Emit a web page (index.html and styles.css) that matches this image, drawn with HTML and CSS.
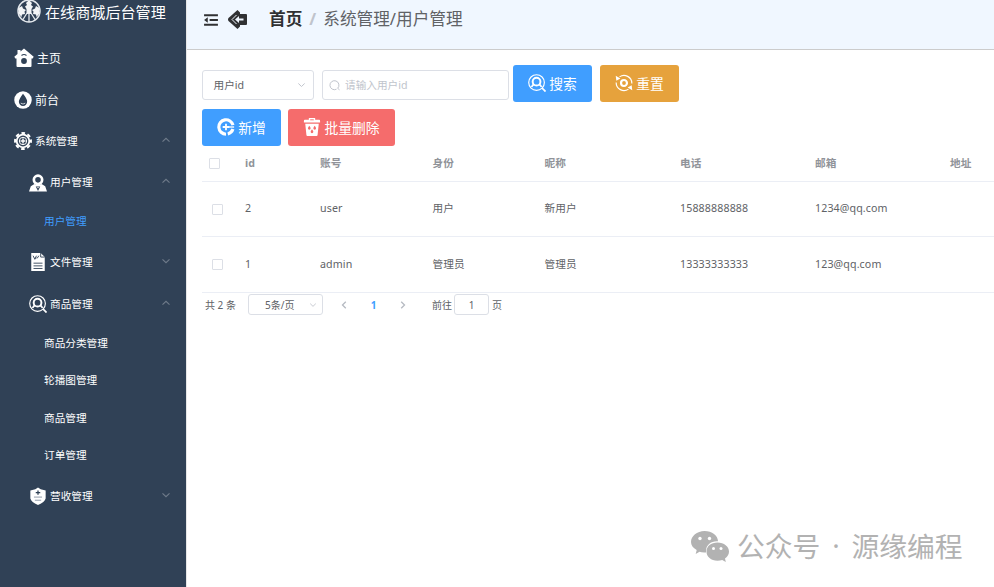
FILE: index.html
```html
<!DOCTYPE html>
<html lang="zh-CN">
<head>
<meta charset="utf-8">
<title>在线商城后台管理</title>
<link rel="stylesheet" href="styles.css">
</head>
<body>
<svg class="defs" width="0" height="0">
  <symbol id="up" viewBox="0 0 10 6"><path d="M1.500 4.700 5 1.300l3.500 3.400" fill="none" stroke="currentColor" stroke-width="1.100"/></symbol>
  <symbol id="down" viewBox="0 0 10 6"><path d="M1.500 1.300 5 4.700l3.500-3.400" fill="none" stroke="currentColor" stroke-width="1.100"/></symbol>
  <symbol id="search-user" viewBox="0 0 20 20"><g fill="none" stroke="currentColor"><circle cx="9.500" cy="9.500" r="8.700" stroke-width="1.300"/><circle cx="9.500" cy="8.500" r="4.300" stroke-width="2.200"/><path d="M4 14.500q1-2.500 2.800-3M15 14.500q-1-2.500-2.800-3" stroke-width="1.900"/><path d="m15.500 15.500 4 4" stroke-width="1.900"/></g></symbol>
</svg>
<div class="app">
  <aside class="sidebar">
    <div class="brand">
      <svg class="brand-icon" viewBox="0 0 24 24"><circle cx="12" cy="12" r="11" fill="none" stroke="#e4e8ed" stroke-width="1.500"/><g fill="#f2f4f6"><path d="m12 1 3 3-1 2 2 1.500-1.500 2.500v5h-5v-5L8 7.500 10 6 9 4z"/><path d="M1.500 9 5 7l1 2.500L9 11l-1.500 1.500L8 15l-3 .5L4.500 18 2 15zM22.500 9 19 7l-1 2.500-3 1.500 1.500 1.500L16 15l3 .5.500 2.500L22 15z"/></g><path d="M12 14v9M10 14l-4 6.500M14 14l4 6.500" stroke="#e4e8ed" stroke-width="1.300"/></svg>
      <span>在线商城后台管理</span>
    </div>
    <nav>
      <a class="item first">
        <svg class="icon home" viewBox="0 0 20 20"><path d="m10 .5 9.700 8.200-1 1.800H17.500V18q0 1-1 1h-13q-1 0-1-1v-7.500H1.300l-1-1.800L3.500 6V2h3v1.500z" fill="#fff"/><circle cx="10" cy="13" r="2.900" fill="#304156"/><path d="M7.500 7.500q2.500-2 5 0" fill="none" stroke="#304156" stroke-width="1.200"/></svg>
        <span class="wide">主页</span></a>
      <a class="item">
        <svg class="icon" viewBox="0 0 20 20"><circle cx="10" cy="10" r="9.700" fill="#fff"/><path d="M10 3q5 6 4.600 9a4.600 4.600 0 0 1-9.200 0Q5.400 9 10 3z" fill="#304156"/><path d="M7.500 13.500q2.500 2 5 0" fill="none" stroke="#fff" stroke-width=".8"/></svg>
        <span class="wide front">前台</span></a>
      <a class="item">
        <svg class="icon" viewBox="0 0 20 20"><g fill="none" stroke="#fff"><circle cx="10" cy="10" r="8.800" stroke-width="2.300" stroke-dasharray="4 2.910" stroke-dashoffset="2"/><circle cx="10" cy="10" r="7" stroke-width="2"/><circle cx="10" cy="10" r="4.100" stroke-width="1.100"/><path d="M10 7.200v5.600M7.200 10h5.600" stroke-width="1.600"/></g></svg>
        <span>系统管理</span><svg class="arrow"><use href="#up"/></svg></a>
      <a class="item sub people">
        <svg class="icon" viewBox="0 0 20 20"><circle cx="10" cy="6.500" r="4.600" fill="none" stroke="#fff" stroke-width="3"/><path d="M6 11q4 2.500 8 0l4 2.500 2 6H0l2-6z" fill="#fff"/><path d="M7.500 14h5L10 19z" fill="#304156"/><path d="M9 14.500h2L10 16z" fill="#fff"/></svg>
        <span>用户管理</span><svg class="arrow"><use href="#up"/></svg></a>
      <a class="item leaf active"><span>用户管理</span></a>
      <a class="item sub files">
        <svg class="icon" viewBox="0 0 20 20"><path d="M2.500 0H13l4.500 4.500V20h-15z" fill="#fff"/><path d="M13 0v4.500h4.500M5 11.300h10M5 14.300h10M5 17.200h10M4.500 3l2 4 2-2M9 6l2-3M8.500 3l-2 3" fill="none" stroke="#304156" stroke-width="1"/></svg>
        <span>文件管理</span><svg class="arrow"><use href="#down"/></svg></a>
      <a class="item sub goods">
        <svg class="icon"><use href="#search-user"/></svg>
        <span>商品管理</span><svg class="arrow"><use href="#up"/></svg></a>
      <a class="item leaf"><span>商品分类管理</span></a>
      <a class="item leaf"><span>轮播图管理</span></a>
      <a class="item leaf"><span>商品管理</span></a>
      <a class="item leaf"><span>订单管理</span></a>
      <a class="item sub income">
        <svg class="icon" viewBox="0 0 20 20"><path d="m10 .5 3 2 5.500 1.300v9q-1 4.200-8.500 7.200-7.500-3-8.500-7.200v-9L7 2.500z" fill="#fff"/><path d="M10 4v4.500M7.500 6.200h5" stroke="#304156" stroke-width="1.400"/><path d="M5.500 11.200h9M6.500 14.700h7" stroke="#8491a0" stroke-width="1"/></svg>
        <span>营收管理</span><svg class="arrow"><use href="#down"/></svg></a>
    </nav>
  </aside>
  <main class="main">
    <header class="topbar">
      <svg class="fold" viewBox="0 0 15 13"><g fill="#303133"><path d="M0 .3h15v2.200H0zM6 5.400h9v2.200H6zM0 10.500h15v2.200H0zM0 6.500l4-3v6z"/></g></svg>
      <svg class="back" viewBox="0 0 20 19"><path d="m9.500 0 2.500 2.500V4h6q1 0 1 1v9q0 1-1 1h-6v1.500L9.500 19 .5 11q-1-1.500 0-3z" fill="#303133"/><path d="M8.500 5 4 9.500 8.500 14" fill="none" stroke="#f0f7ff" stroke-width="1"/><path d="m7 9.500 4-3.500v2.500h4.500v2H11V13z" fill="#f0f7ff"/></svg>
      <div class="crumbs"><b>首页</b><i>/</i><span>系统管理/用户管理</span></div>
    </header>
    <section class="content">
      <div class="filters">
        <div class="select"><span>用户id</span><svg class="caret"><use href="#down"/></svg></div>
        <label class="search"><svg viewBox="0 0 12 12"><path d="M8.700 9.300a4.500 4.500 0 1 0-1.200.9M8.700 9.300l1.800 1.500" fill="none" stroke="#c0c4cc"/></svg><input placeholder="请输入用户id"></label>
        <button class="btn primary find"><svg><use href="#search-user"/></svg>搜索</button>
        <button class="btn warning"><svg viewBox="0 0 20 20"><g fill="none" stroke="#fff" stroke-width="1.300"><path d="M5 3.200A8.700 8.700 0 0 1 18.700 10.500M15 16.800A8.700 8.700 0 0 1 1.300 9.500"/><circle cx="10" cy="10" r="3.300" stroke-width="2.400"/></g><path d="m.8 2 .7 5.500L6 5zM19.200 18l-.7-5.500L14 15z" fill="#fff"/></svg>重置</button>
      </div>
      <div class="actions">
        <button class="btn primary"><svg viewBox="0 0 20 20"><g fill="none" stroke="#fff"><path d="M17.800 8A8 8 0 1 0 10 18M12 17.700a8 8 0 0 0 5.700-5.400" stroke-width="3.500"/><path d="M10 6.300v7.400M6.300 10h7.400" stroke-width="2"/><path d="M13 10h6" stroke-width="1.500"/></g></svg>新增</button>
        <button class="btn danger"><svg viewBox="0 0 20 20"><path d="M6.500 0h7v2H18q1 0 1 1.500V5H1V3.500Q1 2 2 2h4.500zM2.500 6.500h15L16.200 19q-.1 1-1 1H4.800q-.9 0-1-1z" fill="#fff"/><path d="M8 2h4" stroke="#f56c6c"/><path d="M7 8.500q3 3.500 0 4.500-3-1 0-4.500M13 8.500q3 3.500 0 4.500-3-1 0-4.500M10 12.500q3 3.500 0 4.500-3-1 0-4.500" fill="#f56c6c"/></svg>批量删除</button>
      </div>
      <div class="table">
        <div class="row head"><div><i class="check"></i></div><div>id</div><div>账号</div><div>身份</div><div>昵称</div><div>电话</div><div>邮箱</div><div>地址</div></div>
        <div class="row"><div><i class="check"></i></div><div>2</div><div>user</div><div>用户</div><div>新用户</div><div>15888888888</div><div>1234@qq.com</div><div></div></div>
        <div class="row last"><div><i class="check"></i></div><div>1</div><div>admin</div><div>管理员</div><div>管理员</div><div>13333333333</div><div>123@qq.com</div><div></div></div>
      </div>
      <div class="pager">
        <span class="total">共 2 条</span>
        <div class="size"><span>5条/页</span><svg class="caret"><use href="#down"/></svg></div>
        <svg class="step prev" viewBox="0 0 6 8"><path d="M4.800.8 1.500 4l3.300 3.200" fill="none" stroke="#b6bac2" stroke-width="1.300"/></svg>
        <b class="current">1</b>
        <svg class="step next" viewBox="0 0 6 8"><path d="M1.200.8 4.500 4 1.200 7.200" fill="none" stroke="#b6bac2" stroke-width="1.300"/></svg>
        <span>前往</span><span class="jump">1</span><span>页</span>
      </div>
    </section>
    <div class="account">
      <svg viewBox="0 0 38 31"><path d="M13.500 0C21 0 27 4.500 27 10.300h-1C19.500 10.300 15 14.500 15 20v1.500q-4 .3-6.500-.7L4.700 23l1-4C2 17 0 14 0 11 0 5 6 0 13.500 0z" fill="#b2b2b2"/><path d="M26.500 11.500C33 11.500 38 15.500 38 20.500q0 4-4 7l.8 3.500-3.600-2q-2.200.7-4.700.7c-6.500 0-11-4-11-9.200s4.500-9 11-9z" fill="#b2b2b2"/><g fill="#fff"><circle cx="9" cy="7.500" r="1.700"/><circle cx="18.500" cy="7.500" r="1.700"/><circle cx="22.500" cy="17.500" r="1.500"/><circle cx="30" cy="17.500" r="1.500"/></g></svg>
      <span class="kind">公众号</span><span class="dot">·</span><span>源缘编程</span>
    </div>
  </main>
</div>
</body>
</html>
```

FILE: styles.css
```css
* { box-sizing: border-box; }
body {
  margin: 0;
  font: 10.65px/16px "Noto Sans", "Noto Sans CJK SC", sans-serif;
  color: #606266;
  background: #fff;
  overflow: hidden;
}
.defs { position: absolute; }
svg { display: block; flex: none; }
.app { display: flex; width: 994px; height: 587px; }

.sidebar { width: 187px; flex: none; background: #304156; border-right: 1px solid #e6e6e6; color: #fff; overflow: hidden; }
.brand { height: 37.3px; padding-left: 17px; display: flex; align-items: flex-start; font-size: 15.1px; line-height: 24px; white-space: nowrap; }
.brand-icon { width: 24px; height: 24px; margin: -1px 4px 0 0; }
.item { display: flex; align-items: center; height: 41.6px; padding: 0 16px 0 14px; color: #fff; }
.item .icon { width: 18px; height: 18px; margin-right: 3px; }
.item .home { width: 20px; height: 20px; }
.item .wide { font-size: 12px; padding-top: 2px; }
.arrow { width: 10px; height: 6px; margin: -3px -1px 0 auto; color: #6f7b8a; }
.sub { padding-left: 29px; }
.people span, .active span { margin-top: -2px; }
.files { padding-top: 1px; }
.goods { padding-top: 1.5px; }
.income { padding-top: 3px; }
.leaf { height: 37.4px; padding-left: 44px; }
.active { color: #409eff; }

.main { flex: 1; min-width: 0; display: flex; flex-direction: column; }
.topbar { height: 50px; flex: none; display: flex; align-items: flex-start; padding: 10px 0 0 17px; background: #f0f7ff; border-bottom: 1px solid #ccc; }
.fold { width: 14px; height: 12px; margin: 4px 10px 0 0; }
.back { width: 20px; height: 19px; margin: 0 21px 0 0; }
.crumbs { display: flex; font-size: 16.65px; line-height: 18px; white-space: nowrap; }
.crumbs b { color: #303133; }
.crumbs i { width: 21px; text-align: center; color: #c0c4cc; font-weight: 700; font-style: normal; }

.content { flex: 1; padding: 15px 0 0 15px; overflow: hidden; }
.filters { display: flex; align-items: center; height: 37px; }
.select, .search { display: flex; align-items: center; height: 30px; border: 1px solid #dcdfe6; border-radius: 3px; margin-top: 3px; }
.select { width: 112px; padding: 0 7px 0 10.500px; margin-right: 8px; justify-content: space-between; }
.caret { width: 9px; height: 6px; color: #c0c4cc; }
.search { width: 187px; padding-left: 6px; margin-right: 4px; }
.search svg { width: 12px; height: 12px; margin-right: 4px; }
.search input { width: 150px; padding: 0; border: 0; outline: 0; background: none; font: inherit; color: #606266; }
.search input::placeholder { color: #c0c4cc; opacity: 1; }
.btn { display: flex; align-items: center; justify-content: center; width: 79px; height: 37px; padding: 0; border: 0; border-radius: 3px; color: #fff; font: 13.8px/20px "Noto Sans", "Noto Sans CJK SC", sans-serif; white-space: nowrap; }
.btn svg { width: 18px; height: 18px; margin: -2px 3px 0 0; }
.primary { background: #409eff; }
.warning { background: #e6a23c; }
.danger { background: #f56c6c; width: 107px; }
.find { margin-right: 8px; }
.actions { display: flex; gap: 7px; margin-top: 7px; }

.row { display: grid; grid-template-columns: 35.5px 75px 112.5px 112px 135.5px 135px 135px 52px; align-items: center; height: 55px; border-bottom: 1px solid #ebeef5; white-space: nowrap; }
.row > div { padding: 0 0 2px 7.5px; letter-spacing: .12px; }
.row > div:first-child { padding: 0 0 0 10px; }
.head { height: 36px; color: #909399; font-weight: 700; }
.row.head > div:first-child { padding-left: 7px; }
.last { height: 56px; }
.check { display: block; width: 11px; height: 11px; border: 1px solid #dcdfe6; border-radius: 1px; }
.pager { display: flex; align-items: center; height: 22px; padding: 1px 0 0 3px; font-size: 10px; white-space: nowrap; }
.total { width: 43px; }
.size { display: flex; align-items: center; justify-content: space-between; width: 75px; height: 21px; padding: 0 5px 0 16px; border: 1px solid #dcdfe6; border-radius: 3px; }
.size .caret { width: 8px; }
.step { width: 6px; height: 8px; }
.prev { margin-left: 18px; }
.current { width: 53px; text-align: center; color: #409eff; }
.next { margin-right: 26px; }
.jump { width: 35px; height: 21px; line-height: 21px; margin: 0 3px 0 2px; border: 1px solid #dcdfe6; border-radius: 3px; text-align: center; }

.account { display: flex; align-items: center; height: 40px; margin: 0 0 21px 504px; color: #b2b2b2; font-size: 27.8px; line-height: 38px; white-space: nowrap; font-family: "Noto Sans CJK SC", sans-serif; }
.account svg { width: 38px; height: 31px; margin-right: 8px; }
.account span { margin-top: -2px; }
.dot { width: 31px; text-align: center; font-family: "Noto Sans", sans-serif; }
```
